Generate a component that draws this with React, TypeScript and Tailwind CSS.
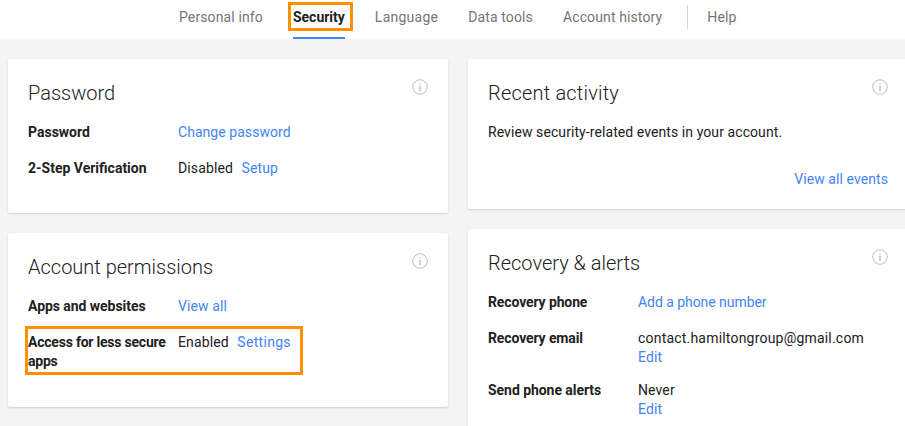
const font = { fontFamily: 'Roboto, sans-serif' };

function InfoIcon() {
  return (
    <svg className="absolute right-[20px] top-[20px]" width="16" height="16" viewBox="0 0 16 16" fill="none">
      <circle cx="8" cy="8" r="7.25" stroke="#bdbdbd" strokeWidth="1" />
      <rect x="7.5" y="7" width="1" height="5" fill="#9e9e9e" />
      <rect x="7.5" y="4.5" width="1" height="1" fill="#9e9e9e" />
    </svg>
  );
}

function Link({ children }: { children: React.ReactNode }) {
  return <a className="text-[#4285f4]">{children}</a>;
}

function Row({ label, tight, labelClass, children }: { label: string; tight?: boolean; labelClass?: string; children: React.ReactNode }) {
  return (
    <div className={`relative flex text-sm leading-[19px] ${tight ? 'mb-[14px]' : 'mb-[17px]'}`}>
      <div className={`w-[150px] shrink-0 font-bold text-[#212121] ${labelClass ?? ''}`}>{label}</div>
      <div className="tracking-[0.12px] text-[#212121]">{children}</div>
    </div>
  );
}

function Card({ title, className, titleClass, children }: { title: string; className: string; titleClass?: string; children: React.ReactNode }) {
  return (
    <section className={`relative rounded-[2px] bg-white px-5 pt-5 shadow-[0_1px_2px_rgba(0,0,0,0.15)] ${className}`}>
      <InfoIcon />
      <h2 className={`mb-[16px] h-[28px] text-[20px] font-light leading-[28px] text-[#212121] ${titleClass ?? ''}`}>{title}</h2>
      {children}
    </section>
  );
}

export default function App() {
  return (
    <div style={font} className="h-[426px] w-[905px] overflow-hidden bg-[#f4f4f4]">
      <nav className="flex h-[39px] items-stretch gap-[30px] bg-white pl-[179px] text-sm tracking-[0.12px] text-[#757575]">
        <a className="pt-[7px]">Personal info</a>
        <a className="relative border-b-2 border-[#4285f4] pt-[7px] font-bold tracking-normal text-[#212121]">
          Security
          <span className="absolute -left-[5px] -right-[8px] top-[2px] h-[29px] border-[3px] border-[#ff9100]" />
        </a>
        <a className="pt-[7px] tracking-[0.25px]">Language</a>
        <a className="pt-[7px]">Data tools</a>
        <a className="pt-[7px]">Account history</a>
        <span className="ml-[-5px] mr-[-11px] mt-[5px] h-[24px] w-px bg-[#d6d6d6]" />
        <a className="pt-[7px]">Help</a>
      </nav>

      <div className="flex w-[960px] gap-5 pl-2 pt-5">
        <div className="flex w-[440px] flex-col gap-5">
          <Card title="Password" className="h-[154px]">
            <Row label="Password">
              <span className="tracking-[0.05px]"><Link>Change password</Link></span>
            </Row>
            <Row label="2-Step Verification">
              Disabled <span className="ml-[5px]"><Link>Setup</Link></span>
            </Row>
          </Card>
          <Card title="Account permissions" className="h-[174px]">
            <Row label="Apps and websites" labelClass="tracking-[-0.05px]">
              <Link>View all</Link>
            </Row>
            <Row label="Access for less secure apps" labelClass="tracking-[-0.22px]">
              Enabled <span className="ml-[5px] tracking-[0.3px]"><Link>Settings</Link></span>
              <span className="absolute -left-[3px] top-[-7px] h-[49px] w-[278px] border-[3px] border-[#ff9100]" />
            </Row>
          </Card>
        </div>

        <div className="flex w-[440px] flex-col gap-5">
          <Card title="Recent activity" className="h-[150px]" titleClass="tracking-[0.2px]">
            <p className="text-sm leading-[19px] tracking-[0.08px] text-[#212121]">Review security-related events in your account.</p>
            <div className="mt-[28px] text-right text-sm leading-[19px] tracking-[0.08px]">
              <Link>View all events</Link>
            </div>
          </Card>
          <Card title="Recovery &amp; alerts" className="h-[240px]">
            <Row label="Recovery phone" labelClass="tracking-[-0.12px]">
              <span className="tracking-[-0.05px]"><Link>Add a phone number</Link></span>
            </Row>
            <Row label="Recovery email" tight labelClass="tracking-[-0.12px]">
              <div className="tracking-[0.2px]">contact.hamiltongroup@gmail.com</div>
              <Link>Edit</Link>
            </Row>
            <Row label="Send phone alerts" tight labelClass="tracking-[-0.05px]">
              <div>Never</div>
              <Link>Edit</Link>
            </Row>
          </Card>
        </div>
      </div>
    </div>
  );
}
